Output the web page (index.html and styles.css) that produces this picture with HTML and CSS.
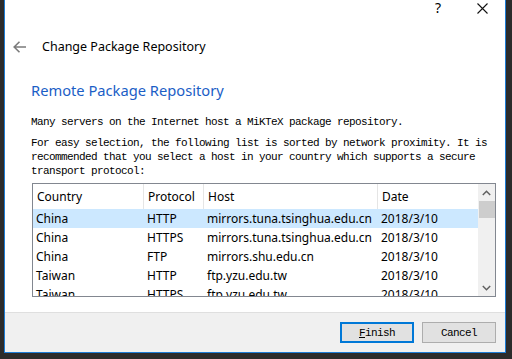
FILE: index.html
```html
<!DOCTYPE html>
<html lang="en">
  <head>
    <meta charset="UTF-8" />
    <meta name="viewport" content="width=device-width, initial-scale=1.0" />
    <title>Change Package Repository</title>
    <link rel="stylesheet" href="styles.css">
  </head>

  <body>
    <div class="dialog">
      <div class="titlebar">
        <span class="help">?</span>
        <svg class="close" width="11" height="11" viewBox="0 0 11 11">
          <path d="M0.5 0.5L10.5 10.5M10.5 0.5L0.5 10.5" stroke="#111" stroke-width="1.1" fill="none" />
        </svg>
      </div>

      <div class="nav">
        <svg class="back" width="13" height="12" viewBox="0 0 13 12">
          <path d="M1 6H13M6.5 0.8L1.2 6L6.5 11.2" stroke="#7b7b7b" stroke-width="1.6" fill="none" />
        </svg>
        <span class="nav-title">Change Package Repository</span>
      </div>

      <div class="content">
        <h1>Remote Package Repository</h1>
        <p>Many servers on the Internet host a MiKTeX package repository.</p>
        <p class="second">
          For easy selection, the following list is sorted by network proximity. It is<br>
          recommended that you select a host in your country which supports a secure<br>
          transport protocol:
        </p>

        <div class="list">
          <div class="list-body">
            <div class="row header">
              <span>Country</span>
              <span>Protocol</span>
              <span>Host</span>
              <span>Date</span>
            </div>
            <div class="row selected">
              <span>China</span>
              <span>HTTP</span>
              <span>mirrors.tuna.tsinghua.edu.cn</span>
              <span>2018/3/10</span>
            </div>
            <div class="row">
              <span>China</span>
              <span>HTTPS</span>
              <span>mirrors.tuna.tsinghua.edu.cn</span>
              <span>2018/3/10</span>
            </div>
            <div class="row">
              <span>China</span>
              <span>FTP</span>
              <span>mirrors.shu.edu.cn</span>
              <span>2018/3/10</span>
            </div>
            <div class="row">
              <span>Taiwan</span>
              <span>HTTP</span>
              <span>ftp.yzu.edu.tw</span>
              <span>2018/3/10</span>
            </div>
            <div class="row">
              <span>Taiwan</span>
              <span>HTTPS</span>
              <span>ftp.yzu.edu.tw</span>
              <span>2018/3/10</span>
            </div>
          </div>

          <div class="scrollbar">
            <div class="arrow">
              <svg width="9" height="6" viewBox="0 0 9 6">
                <path d="M0.8 5L4.5 1.3L8.2 5" stroke="#606060" stroke-width="1.5" fill="none" />
              </svg>
            </div>
            <div class="thumb"></div>
            <div class="track"></div>
            <div class="arrow">
              <svg width="9" height="6" viewBox="0 0 9 6">
                <path d="M0.8 1L4.5 4.7L8.2 1" stroke="#606060" stroke-width="1.5" fill="none" />
              </svg>
            </div>
          </div>
        </div>
      </div>

      <div class="footer">
        <button class="btn default"><u>F</u>inish</button>
        <button class="btn">Cancel</button>
      </div>
    </div>
  </body>
</html>
```

FILE: styles.css
```css
body {
  margin: 0;
  background-color: #2b2b2b;
  font-family: "Noto Sans", Arial, sans-serif;
  color: #000;
  overflow: hidden;
}

.dialog {
  box-sizing: border-box;
  width: 502px;
  height: 353px;
  margin-left: 4px;
  background-color: #fff;
  border: 1px solid #1c7cd5;
  border-top: none;
  display: flex;
  flex-direction: column;
}

.titlebar {
  height: 32px;
  display: flex;
  justify-content: flex-end;
  align-items: flex-start;
}

.help {
  font-size: 14px;
  line-height: 16px;
  margin-right: 36px;
}

.close {
  margin-top: 3px;
  margin-right: 17px;
}

.nav {
  height: 30px;
  display: flex;
  align-items: center;
  padding-left: 8px;
}

.nav-title {
  font-size: 12.5px;
  line-height: 16px;
  margin-left: 16px;
}

.content {
  padding-left: 26px;
  display: flex;
  flex-direction: column;
}

h1 {
  font-size: 14.7px;
  font-weight: normal;
  line-height: 20px;
  color: #1b5ec6;
  margin: 18px 0 0;
}

p {
  font-family: "Liberation Mono", monospace;
  font-size: 11px;
  letter-spacing: -0.6px;
  line-height: 14px;
  margin: 15px 0 0;
}

p.second {
  margin-top: 7px;
}

.list {
  box-sizing: border-box;
  width: 464px;
  height: 114px;
  margin-top: 5px;
  margin-left: 1px;
  border: 1px solid #828790;
  display: flex;
}

.list-body {
  flex: 1;
  overflow: hidden;
}

.row {
  display: grid;
  grid-template-columns: 111px 60px 174px 1fr;
  height: 19px;
  font-size: 12px;
  line-height: 19px;
  white-space: nowrap;
}

.row span {
  padding-left: 3px;
  overflow: hidden;
}

.row.header {
  height: 25px;
  line-height: 25px;
}

.row.header span {
  padding-left: 4px;
  border-right: 1px solid #e5e5e5;
}

.row.header span:last-child {
  border-right: none;
}

.row.selected {
  background-color: #cce8ff;
}

.scrollbar {
  width: 17px;
  background-color: #f0f0f0;
  display: flex;
  flex-direction: column;
}

.scrollbar .arrow {
  height: 17px;
  display: flex;
  align-items: center;
  justify-content: center;
}

.scrollbar .thumb {
  height: 17px;
  margin-left: 1px;
  background-color: #cdcdcd;
}

.scrollbar .track {
  flex: 1;
}

.footer {
  box-sizing: border-box;
  height: 40px;
  margin-top: auto;
  padding: 9px 9px 0 0;
  background-color: #f0f0f0;
  border-top: 1px solid #dfdfdf;
  display: flex;
  justify-content: flex-end;
  align-items: flex-start;
  gap: 8px;
}

.btn {
  box-sizing: border-box;
  width: 74px;
  height: 21px;
  padding: 0;
  background-color: #e1e1e1;
  border: 1px solid #adadad;
  font-family: "Liberation Mono", monospace;
  font-size: 11px;
  letter-spacing: -0.6px;
  color: #000;
}

.btn.default {
  border: 2px solid #0078d7;
}
```
